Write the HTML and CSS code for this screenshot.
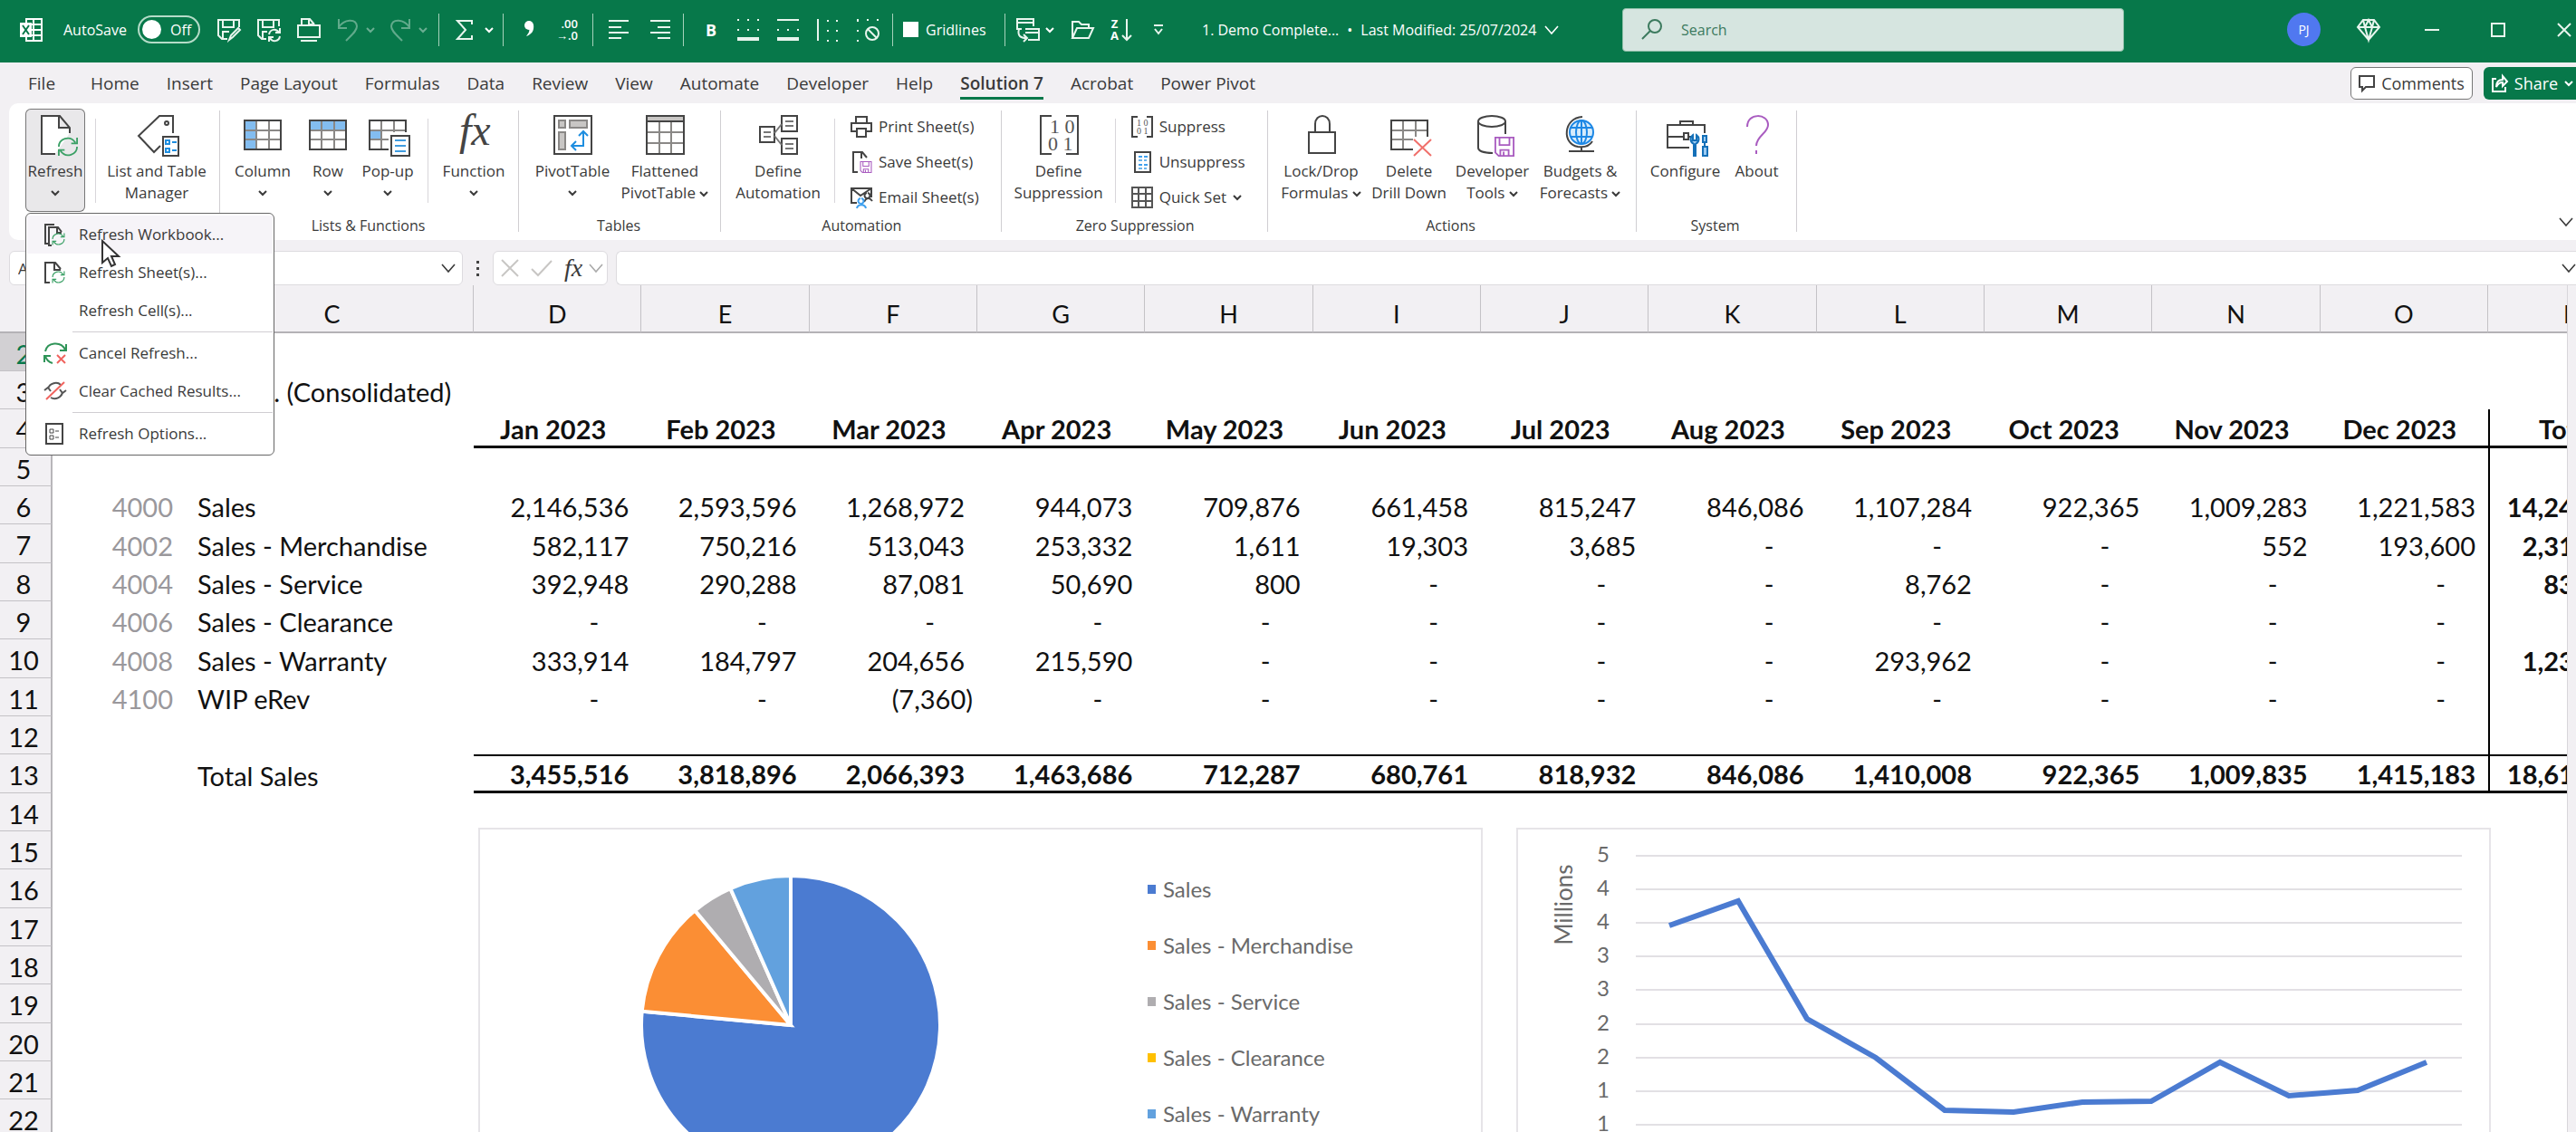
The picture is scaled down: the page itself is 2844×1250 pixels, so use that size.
FILE: index.html
```html
<!DOCTYPE html>
<html lang="en">
<head>
    <meta charset="UTF-8">
    <meta name="viewport" content="width=device-width, initial-scale=1.0">
    <title>1. Demo Complete</title>
    <link rel="stylesheet" href="styles.css">
</head>
<body>
    <!-- shared icons -->
    <svg class="sprite" aria-hidden="true">
        <symbol id="chev" viewBox="0 0 10 8"><path d="M1 2l4 4 4-4" fill="none" stroke="currentColor" stroke-width="2"/></symbol>
        <symbol id="chev-lg" viewBox="0 0 16 12"><path d="M1 2l7 8 7-8" fill="none" stroke="currentColor" stroke-width="1.6"/></symbol>
        <symbol id="sync" viewBox="0 0 24 24">
            <path d="M1 12C1 3 14-3 21 7M23 1v7h-7M23 12c0 9-13 15-20 5M1 23v-7h7" fill="none" stroke="currentColor" stroke-width="2"/>
        </symbol>
        <symbol id="grid" viewBox="0 0 42 34">
            <path d="M14 1v32M28 1v32M1 12h40M1 22h40" fill="none" stroke="#8a8886" stroke-width="2"/>
            <path d="M1 1h40v32H1z" fill="none" stroke="#444" stroke-width="2"/>
        </symbol>
        <symbol id="floppy" viewBox="0 0 24 24">
            <path d="M1 1h22v22H5l-4-4zM6 1v9h12V1M7 23v-7h10v7M11 18v4" fill="none" stroke="currentColor" stroke-width="2"/>
        </symbol>
    </svg>

    <header class="titlebar">
        <svg class="app-icon" width="26" height="26" viewBox="0 0 26 26">
            <path d="M7 1h17v24H7zM7 7h17M7 13h17M7 19h17M15 1v24" fill="none" stroke="#fff" stroke-width="2"/>
            <path d="M0 5h13v16H0z" fill="#fff"/>
            <path d="M3 8l7 10M10 8L3 18" stroke="#07784a" stroke-width="2"/>
        </svg>
        <label class="autosave" for="autosave">AutoSave</label>
        <span class="toggle"><input type="checkbox" id="autosave"><span class="knob"></span>Off</span>
        <div class="quick">
            <button aria-label="Save"><svg width="26" height="26" viewBox="0 0 26 26"><path d="M11 23H5l-4-4V2h23v8M6 2v8h12V2M6 23v-8h7M13 24l2-5 8-8 2 2-8 8z" /></svg></button>
            <button aria-label="Save and refresh"><svg width="26" height="26" viewBox="0 0 26 26"><path d="M10 23H5l-4-4V2h23v7M6 2v8h12V2M6 23v-8h5M13 18c1-6 8-7 11-2M25 11v5h-5M25 20c-1 6-8 7-11 2M13 26v-5h5"/></svg></button>
            <button aria-label="Slides"><svg width="26" height="26" viewBox="0 0 26 26"><path d="M5 8V1h9l5 6M13 1v6h6M1 8h24v13H1zM4 25h18"/></svg></button>
        </div>
        <div class="undo">
            <button aria-label="Undo"><svg width="24" height="26" viewBox="0 0 24 26"><path d="M2 1v10h9M2 10C8 1 21 0 22 9c0 5-5 9-12 16"/></svg></button>
            <svg class="chev" width="10" height="8"><use href="#chev"/></svg>
            <button aria-label="Redo"><svg width="24" height="26" viewBox="0 0 24 26"><path d="M22 1v10h-9M22 10C16 1 3 0 2 9c0 5 5 9 12 16"/></svg></button>
            <svg class="chev" width="10" height="8"><use href="#chev"/></svg>
        </div>
        <div class="tools sum">
            <button aria-label="AutoSum"><svg width="20" height="26" viewBox="0 0 20 26"><path d="M18 7V3H2l9 10L2 23h16v-4"/></svg></button>
            <svg class="chev" width="10" height="8"><use href="#chev"/></svg>
        </div>
        <div class="tools comma">
            <button aria-label="Comma style"><svg width="16" height="26" viewBox="0 0 16 26"><circle cx="8" cy="8" r="5" class="solid"/><path d="M13 7c1 7-2 11-8 13 3-4 4-6 3-9z" class="solid"/></svg></button>
            <button aria-label="Decrease decimal" class="dec"><span>.00</span><span>→.0</span></button>
        </div>
        <div class="tools align">
            <button aria-label="Align left"><svg width="26" height="26" viewBox="0 0 26 26"><path d="M1 3h22M1 10h14M1 16h22M1 22h14"/></svg></button>
            <button aria-label="Align right"><svg width="26" height="26" viewBox="0 0 26 26"><path d="M3 3h22M11 10h14M3 16h22M11 22h14"/></svg></button>
        </div>
        <div class="tools borders">
            <button aria-label="Bold" class="bold">B</button>
            <button aria-label="Bottom border"><svg width="26" height="26" viewBox="0 0 26 26"><path d="M1 2h24M1 13h24" class="dots"/><path d="M1 23h24" class="thick"/></svg></button>
            <button aria-label="Top and bottom border"><svg width="26" height="26" viewBox="0 0 26 26"><path d="M1 13h24" class="dots"/><path d="M1 2h24"/><path d="M1 23h24" class="thick"/></svg></button>
            <button aria-label="Left border"><svg width="26" height="26" viewBox="0 0 26 26"><path d="M13 2v24M23 2v24" class="dots"/><path d="M2 1v24"/></svg></button>
            <button aria-label="No border"><svg width="26" height="26" viewBox="0 0 26 26"><path d="M1 2h24M2 2v24" class="dots"/><circle cx="18" cy="17" r="7"/><path d="M13 12l10 10"/></svg></button>
        </div>
        <div class="tools gridlines">
            <input type="checkbox" id="gridlines"><label for="gridlines">Gridlines</label>
        </div>
        <div class="tools windows">
            <button aria-label="Switch windows"><svg width="26" height="26" viewBox="0 0 26 26"><path d="M6 12H1V1h18v8M1 5h18M10 12h15v12H13M10 16h15M3 12c-2 8 2 10 8 10M8 18l4 4-4 4"/></svg></button>
            <svg class="chev" width="10" height="8"><use href="#chev"/></svg>
            <button aria-label="Open"><svg width="26" height="26" viewBox="0 0 26 26"><path d="M2 22V4h7l3 3h8v4M2 22l5-11h18l-5 11z"/></svg></button>
            <button aria-label="Sort descending" class="sort"><span>Z<br>A</span><svg width="12" height="26" viewBox="0 0 12 26"><path d="M6 1v23M1 19l5 5 5-5"/></svg></button>
            <button aria-label="Customize toolbar"><svg width="12" height="12" viewBox="0 0 12 12"><path d="M1 1h10M2 5l4 5 4-5"/></svg></button>
        </div>
        <div class="doc-name"><span>1. Demo Complete...</span><span>•</span><span>Last Modified: 25/07/2024</span><svg width="16" height="12"><use href="#chev-lg"/></svg></div>
        <div class="search">
            <svg width="24" height="24" viewBox="0 0 24 24"><circle cx="15" cy="8" r="7" fill="none" stroke="#3c7a5e" stroke-width="2"/><path d="M10 13L1 22" stroke="#3c7a5e" stroke-width="2"/></svg>
            <input type="text" placeholder="Search" aria-label="Search">
        </div>
        <div class="window-controls">
            <span class="avatar">PJ</span>
            <button aria-label="Premium"><svg width="26" height="26" viewBox="0 0 26 26"><path d="M7 2h12l6 8-12 14L1 10zM1 10h24M7 2l2 8 4 14 4-14 2-8M9 10l4-8 4 8"/></svg></button>
            <button aria-label="Minimize"><svg width="16" height="16" viewBox="0 0 16 16"><path d="M0 8h16"/></svg></button>
            <button aria-label="Maximize"><svg width="16" height="16" viewBox="0 0 16 16"><path d="M1 1h14v14H1z"/></svg></button>
            <button aria-label="Close"><svg width="16" height="16" viewBox="0 0 16 16"><path d="M1 1l14 14M15 1L1 15"/></svg></button>
        </div>
    </header>

    <nav class="tabs">
        <a href="#" class="file">File</a>
        <a href="#">Home</a>
        <a href="#">Insert</a>
        <a href="#">Page Layout</a>
        <a href="#">Formulas</a>
        <a href="#">Data</a>
        <a href="#">Review</a>
        <a href="#">View</a>
        <a href="#">Automate</a>
        <a href="#">Developer</a>
        <a href="#">Help</a>
        <a href="#" class="active">Solution 7</a>
        <a href="#">Acrobat</a>
        <a href="#">Power Pivot</a>
        <div class="tab-actions">
            <button class="comments"><svg width="18" height="18" viewBox="0 0 18 18"><path d="M1 1h16v12H8l-4 4v-4H1z" fill="none" stroke="#444" stroke-width="2"/></svg>Comments</button>
            <button class="share"><svg width="18" height="20" viewBox="0 0 18 20"><path d="M5 5H1v14h14v-5M5 14c0-6 3-8 7-8V2l5 6-5 5V9c-3 0-5 1-7 5z" fill="none" stroke="#fff" stroke-width="2"/></svg>Share<svg width="10" height="8"><use href="#chev"/></svg></button>
        </div>
    </nav>

    <section class="ribbon">
        <div class="group first">
            <div class="buttons">
                <div class="dropdown">
                    <button class="big xs open">
                        <svg width="48" height="48" viewBox="0 0 48 48"><path d="M24 44H9V2h20l11 13v6M28 2v13h12" fill="#fff" stroke="#444" stroke-width="2"/><svg x="26" y="25" width="24" height="22" class="green"><use href="#sync"/></svg></svg>
                        <span>Refresh</span><svg width="10" height="8"><use href="#chev"/></svg>
                    </button>
                    <div class="menu">
                        <button class="hover"><svg width="24" height="24" viewBox="0 0 24 24"><path d="M6 22H1V1h10M8 24H5V4h10l4 5M14 4v6h5" fill="none" stroke="#444" stroke-width="2"/><svg x="8" y="10" width="15" height="14" class="green"><use href="#sync"/></svg></svg>Refresh Workbook...</button>
                        <button><svg width="24" height="24" viewBox="0 0 24 24"><path d="M6 23H1V1h11l6 7M11 1v8h7" fill="none" stroke="#444" stroke-width="2"/><svg x="8" y="10" width="15" height="14" class="green"><use href="#sync"/></svg></svg>Refresh Sheet(s)...</button>
                        <button><span class="no-icon"></span>Refresh Cell(s)...</button>
                        <hr>
                        <button><svg width="24" height="24" viewBox="0 0 24 24" fill="none" stroke-width="2"><path d="M1 10C3 0 18-2 23 8M24 2v7h-7M9 23C5 22 2 19 1 15M0 22v-7h7" stroke="#2f9458"/><path d="M14 14l9 9M23 14l-9 9" stroke="#f0645f"/></svg>Cancel Refresh...</button>
                        <button><svg width="24" height="24" viewBox="0 0 24 24" fill="none" stroke-width="2"><path d="M4 9C6 3 14 1 18 5M0 11l4-3 3 4M20 13c-1 6-8 9-13 6M24 11l-4 3-3-4" stroke="#555"/><path d="M2 21L22 2" stroke="#f0645f"/></svg>Clear Cached Results...</button>
                        <hr>
                        <button><svg width="24" height="24" viewBox="0 0 24 24" fill="none" stroke="#444"><path d="M2 1h18v22H2z" stroke-width="2"/><path d="M6 7h4v4H6zM6 14h4v4H6zM12 9h4M12 16h4"/></svg>Refresh Options...</button>
                    </div>
                </div>
                <i class="sep"></i>
                <button class="big xl">
                    <svg width="48" height="48" viewBox="0 0 48 48" fill="none" stroke="#444" stroke-width="2"><path d="M42 21V2H27L4 24l17 18 7-7"/><circle cx="35" cy="10" r="2"/><path d="M31 25h17v21H31z" fill="#fff"/><path d="M34 29h4v4h-4zM34 38h4v4h-4zM41 31h5M41 40h5" stroke="#1e8ee0"/></svg>
                    <span>List and Table<br>Manager</span>
                </button>
            </div>
            <div class="group-name"></div>
        </div>

        <div class="group">
            <div class="buttons">
                <button class="big sm">
                    <svg width="48" height="48" viewBox="0 0 48 48"><path d="M4 6h14v33H4z" fill="#83bdf0"/><use href="#grid" x="3" y="6" width="42" height="34"/></svg>
                    <span>Column</span><svg width="10" height="8"><use href="#chev"/></svg>
                </button>
                <button class="big xs">
                    <svg width="48" height="48" viewBox="0 0 48 48"><path d="M4 6h41v12H4z" fill="#83bdf0"/><use href="#grid" x="3" y="6" width="42" height="34"/></svg>
                    <span>Row</span><svg width="10" height="8"><use href="#chev"/></svg>
                </button>
                <button class="big xs">
                    <svg width="48" height="48" viewBox="0 0 48 48"><path d="M4 18h13v11H4z" fill="#83bdf0"/><use href="#grid" x="3" y="6" width="42" height="34"/><path d="M25 20h24v28H25z" fill="#fff"/><path d="M28 24h20v22H28z" fill="#fff" stroke="#444" stroke-width="2"/><path d="M32 29h12M32 35h12M32 41h12" stroke="#3f9ce0" stroke-width="2"/></svg>
                    <span>Pop-up</span><svg width="10" height="8"><use href="#chev"/></svg>
                </button>
                <i class="sep"></i>
                <button class="big sm">
                    <svg width="48" height="48" viewBox="0 0 48 48"><text x="8" y="34" class="fx-lg">fx</text></svg>
                    <span>Function</span><svg width="10" height="8"><use href="#chev"/></svg>
                </button>
            </div>
            <div class="group-name">Lists &amp; Functions</div>
        </div>

        <div class="group">
            <div class="buttons">
                <button class="big lg">
                    <svg width="48" height="48" viewBox="0 0 48 48" fill="none" stroke="#444" stroke-width="2"><path d="M4 2h41v42H4z"/><g fill="#c8c6c4" stroke="#8a8886"><path d="M9 7h7v8H9zM21 7h19v8H21zM9 20h7v19H9z"/></g><path d="M23 35h13V20M31 24l5-5 5 5M28 30l-5 5 5 5" stroke="#1e8ee0"/></svg>
                    <span>PivotTable</span><svg width="10" height="8"><use href="#chev"/></svg>
                </button>
                <button class="big lg">
                    <svg width="48" height="48" viewBox="0 0 48 48" fill="none" stroke-width="2"><path d="M4 2h41v6H4z" fill="#c8c6c4"/><path d="M18 8v36M31 8v36M4 20h41M4 32h41" stroke="#8a8886"/><path d="M4 2h41v42H4zM4 8h41" stroke="#444"/></svg>
                    <span>Flattened<br>PivotTable <svg width="10" height="8"><use href="#chev"/></svg></span>
                </button>
            </div>
            <div class="group-name">Tables</div>
        </div>

        <div class="group split">
            <div class="buttons">
                <button class="big lg">
                    <svg width="48" height="48" viewBox="0 0 48 48" fill="none" stroke="#444" stroke-width="2"><path d="M4 14h16v17H4zM28 2h17v17H28zM28 27h17v17H28z"/><path d="M8 20h8M8 25h8M32 8h9M32 13h9M32 33h9M32 38h9M20 21l8-10M20 24l8 10" stroke="#777"/></svg>
                    <span>Define<br>Automation</span>
                </button>
                <i class="sep"></i>
                <div class="list">
                    <button><svg width="24" height="24" viewBox="0 0 24 24" fill="none" stroke="#444" stroke-width="2"><path d="M6 17H1V8h22v9h-5M6 8V1h12v7M7 14h10v9H7z"/></svg>Print Sheet(s)</button>
                    <button><svg width="24" height="24" viewBox="0 0 24 24" fill="none" stroke="#444" stroke-width="2"><path d="M8 23H3V1h10l5 6M12 1v7"/><svg x="10" y="11" width="14" height="13" class="purple"><use href="#floppy"/></svg></svg>Save Sheet(s)</button>
                    <button><svg width="24" height="24" viewBox="0 0 24 24" fill="none" stroke="#444" stroke-width="2"><path d="M7 18H1V2h22v10M1 2l10 8 12-8M19 7a3 3 0 1 1-1 0M15 17c2-5 6-5 9-1"/><path d="M12 13a3 3 0 1 1-1 0M7 24c1-5 9-5 10 0" stroke="#3fa0ee"/></svg>Email Sheet(s)</button>
                </div>
            </div>
            <div class="group-name">Automation</div>
        </div>

        <div class="group split">
            <div class="buttons">
                <button class="big lg">
                    <svg width="48" height="48" viewBox="0 0 48 48"><path d="M16 2H4v42h12M32 2h13v42H32" fill="none" stroke="#444" stroke-width="2"/><text x="14" y="21" class="bits">1 0</text><text x="12" y="40" class="bits">0 1</text></svg>
                    <span>Define<br>Suppression</span>
                </button>
                <i class="sep"></i>
                <div class="list">
                    <button><svg width="24" height="24" viewBox="0 0 24 24"><path d="M7 1H1v22h6M17 1h6v22h-6" fill="none" stroke="#444" stroke-width="2"/><text x="6" y="11" class="bits-sm">1 0</text><text x="6" y="20" class="bits-sm">0 1</text></svg>Suppress</button>
                    <button><svg width="24" height="24" viewBox="0 0 24 24" fill="none" stroke-width="2"><path d="M4 1h17v22H4z" stroke="#444"/><path d="M8 6h4M14 6h4M8 15h4M14 15h4" stroke="#3fa0ee"/><path d="M8 10h4M14 10h3M8 19h4M14 19h3" stroke="#6bb4ea"/></svg>Unsuppress</button>
                    <button><svg width="24" height="24" viewBox="0 0 24 24" fill="none" stroke="#555" stroke-width="2"><path d="M1 1h22v22H1zM8 1v22M16 1v22M1 8h22M1 16h22"/></svg>Quick Set <svg width="10" height="8"><use href="#chev"/></svg></button>
                </div>
            </div>
            <div class="group-name">Zero Suppression</div>
        </div>

        <div class="group">
            <div class="buttons">
                <button class="big lg">
                    <svg width="48" height="48" viewBox="0 0 48 48" fill="none" stroke="#444" stroke-width="2"><path d="M10 20h29v23H10zM17 20v-9c0-12 16-12 16 0v9"/></svg>
                    <span>Lock/Drop<br>Formulas <svg width="10" height="8"><use href="#chev"/></svg></span>
                </button>
                <button class="big md">
                    <svg width="48" height="48" viewBox="0 0 48 48"><use href="#grid" x="3" y="6" width="42" height="34"/><path d="M28 25h20v20H28z" fill="#fff"/><path d="M29 28l19 18M48 28L29 46" stroke="#f0706b" stroke-width="2"/></svg>
                    <span>Delete<br>Drill Down</span>
                </button>
                <button class="big md">
                    <svg width="48" height="48" viewBox="0 0 48 48" fill="none" stroke="#444" stroke-width="2"><ellipse cx="23" cy="8" rx="15" ry="6"/><path d="M8 8v29c0 4 7 6 16 6M38 8v14"/><svg x="26" y="25" width="22" height="22" class="purple"><use href="#floppy"/></svg></svg>
                    <span>Developer<br>Tools <svg width="10" height="8"><use href="#chev"/></svg></span>
                </button>
                <button class="big lg">
                    <svg width="48" height="48" viewBox="0 0 48 48" fill="none" stroke="#444" stroke-width="2"><path d="M26 3C5 4 3 33 21 36c7 1 13-1 16-6M25 37v4M11 41h28"/><g stroke="#1e88e5"><circle cx="25" cy="20" r="13" fill="#d6ebfb"/><ellipse cx="25" cy="20" rx="6" ry="13"/><path d="M13 15h24M13 25h24M25 7v26"/></g></svg>
                    <span>Budgets &amp;<br>Forecasts <svg width="10" height="8"><use href="#chev"/></svg></span>
                </button>
            </div>
            <div class="group-name">Actions</div>
        </div>

        <div class="group">
            <div class="buttons">
                <button class="big md">
                    <svg width="48" height="48" viewBox="0 0 48 48" fill="none" stroke="#444" stroke-width="2"><path d="M28 37H4V12h41v9M18 12V8h14v4M4 25h18M27 25h3M22 21h5v7h-5z"/><path d="M33 46V33c-5-3-4-8-1-10v6h4v-6c3 2 4 7-1 10v13zM43 46V36h5v10zM43 24h4v7h-4zM45 31v5" fill="#9ccbf2" stroke="#1470b8"/></svg>
                    <span>Configure</span>
                </button>
                <button class="big xs">
                    <svg width="48" height="48" viewBox="0 0 48 48" fill="none" stroke="#a95cc0" stroke-width="2"><path d="M13 14C13-2 36-1 36 12c0 9-13 12-13 23M23 40v4"/></svg>
                    <span>About</span>
                </button>
            </div>
            <div class="group-name">System</div>
        </div>
        <button class="collapse" aria-label="Collapse ribbon"><svg width="16" height="12"><use href="#chev-lg"/></svg></button>
    </section>

    <div class="formula-bar">
        <div class="name-box"><input type="text" value="A2" aria-label="Name box"><svg width="16" height="12"><use href="#chev-lg"/></svg></div>
        <span class="dots-v"><i></i><i></i><i></i></span>
        <div class="fx-box">
            <svg width="20" height="20" viewBox="0 0 20 20"><path d="M1 1l18 18M19 1L1 19" stroke="#c8c6c4" stroke-width="2"/></svg>
            <svg width="24" height="20" viewBox="0 0 24 20"><path d="M1 11l7 7L23 2" fill="none" stroke="#c8c6c4" stroke-width="2"/></svg>
            <span class="fx">fx</span>
            <svg class="pale" width="16" height="12"><use href="#chev-lg"/></svg>
        </div>
        <div class="formula"><input type="text" aria-label="Formula"><svg width="16" height="12"><use href="#chev-lg"/></svg></div>
    </div>

    <main class="sheet">
        <table class="cells">
            <colgroup>
                <col class="col-head"><col class="col-b"><col class="col-c">
                <col><col><col><col><col><col><col><col><col><col><col><col>
                <col class="col-p">
            </colgroup>
            <thead><tr id="letters"></tr></thead>
            <tbody id="rows"></tbody>
        </table>

        <div class="charts">
            <div class="chart pie">
                <svg width="330" height="330" viewBox="-165 -165 330 330" id="pie"></svg>
                <ul class="legend">
                    <li><i class="c1"></i>Sales</li>
                    <li><i class="c2"></i>Sales - Merchandise</li>
                    <li><i class="c3"></i>Sales - Service</li>
                    <li><i class="c4"></i>Sales - Clearance</li>
                    <li><i class="c5"></i>Sales - Warranty</li>
                </ul>
            </div>
            <div class="chart">
                <svg class="line" viewBox="0 0 1072 440" id="line">
                    <text class="axis-title" transform="translate(60 83) rotate(-90)">Millions</text>
                </svg>
            </div>
        </div>
    </main>

    <svg class="cursor" width="20" height="30" viewBox="0 0 20 30"><path d="M1 1v24l6-5 4 9 4-2-4-9h8z" fill="#fff" stroke="#333" stroke-width="2"/></svg>

    <script>
        const months = ['Jan', 'Feb', 'Mar', 'Apr', 'May', 'Jun', 'Jul', 'Aug', 'Sep', 'Oct', 'Nov', 'Dec'];
        const accounts = {
            6: ['4000', 'Sales', [2146536, 2593596, 1268972, 944073, 709876, 661458, 815247, 846086, 1107284, 922365, 1009283, 1221583]],
            7: ['4002', 'Sales - Merchandise', [582117, 750216, 513043, 253332, 1611, 19303, 3685, 0, 0, 0, 552, 193600]],
            8: ['4004', 'Sales - Service', [392948, 290288, 87081, 50690, 800, 0, 0, 0, 8762, 0, 0, 0]],
            9: ['4006', 'Sales - Clearance', [0, 0, 0, 0, 0, 0, 0, 0, 0, 0, 0, 0]],
            10: ['4008', 'Sales - Warranty', [333914, 184797, 204656, 215590, 0, 0, 0, 0, 293962, 0, 0, 0]],
            11: ['4100', 'WIP eRev', [0, 0, -7360, 0, 0, 0, 0, 0, 0, 0, 0, 0]],
            13: ['', 'Total Sales', [3455516, 3818896, 2066393, 1463686, 712287, 680761, 818932, 846086, 1410008, 922365, 1009835, 1415183]]
        };

        function sum(values) {
            return values.reduce((a, b) => a + b, 0);
        }

        function moneyCell(value) {
            const text = Math.abs(value).toLocaleString('en-US');
            if (value === 0) return '<td class="nil">-</td>';
            if (value < 0) return '<td class="neg">(' + text + ')</td>';
            return '<td>' + text + '</td>';
        }

        function buildSheet() {
            const letters = ['', 'B', ...'CDEFGHIJKLMNOP'];
            document.getElementById('letters').innerHTML = letters.map(l => '<th>' + l + '</th>').join('');

            let html = '';
            for (let r = 2; r <= 22; r++) {
                let cells = '<td></td>'.repeat(15);
                if (r === 3) {
                    cells = '<td></td><td>Sol Inc. (Consolidated)</td>' + '<td></td>'.repeat(13);
                } else if (r === 4) {
                    cells = '<td></td><td></td>' + months.map(m => '<td>' + m + ' 2023</td>').join('') + '<td>Total</td>';
                } else if (accounts[r]) {
                    const [code, name, values] = accounts[r];
                    cells = '<td>' + code + '</td><td>' + name + '</td>' + values.map(moneyCell).join('') + moneyCell(sum(values));
                }
                html += '<tr class="r' + r + '"><th>' + r + '</th>' + cells + '</tr>';
            }
            document.getElementById('rows').innerHTML = html;
        }

        function drawPie() {
            const parts = [6, 7, 8, 10].map(r => sum(accounts[r][2]));
            const names = ['c1', 'c2', 'c3', 'c5'];
            const total = sum(parts);
            let angle = 0;
            let html = '';
            parts.forEach((part, i) => {
                const next = angle + part / total * 2 * Math.PI;
                const large = next - angle > Math.PI ? 1 : 0;
                html += '<path class="' + names[i] + '" d="M0 0L' + 165 * Math.sin(angle) + ' ' + -165 * Math.cos(angle) +
                    'A165 165 0 ' + large + ' 1 ' + 165 * Math.sin(next) + ' ' + -165 * Math.cos(next) + 'Z"/>';
                angle = next;
            });
            document.getElementById('pie').innerHTML = html;
        }

        function drawLine() {
            const labels = [5, 4, 4, 3, 3, 2, 2, 1, 1, 0];
            const points = [106, 79, 209, 252, 310, 312, 301, 300, 257, 294, 288, 257];
            let html = '';
            labels.forEach((label, i) => {
                const y = 29 + Math.round(i * 37.1);
                html += '<path class="grid" d="M130 ' + y + 'H1042"/><text class="axis" x="94" y="' + (y + 7) + '">' + label + '</text>';
            });
            const path = points.map((y, i) => (167 + i * 76) + ',' + y).join(' ');
            html += '<polyline points="' + path + '"/>';
            document.getElementById('line').insertAdjacentHTML('beforeend', html);
        }

        buildSheet();
        drawPie();
        drawLine();
    </script>
</body>
</html>
```
FILE: styles.css
```css
* {
    box-sizing: border-box;
}

body {
    margin: 0;
    height: 100vh;
    overflow: hidden;
    display: flex;
    flex-direction: column;
    background: #f2f0f3;
    color: #3a3a3a;
    font-family: "Open Sans", "Noto Sans", sans-serif;
    font-size: 17px;
}

button, input {
    font: inherit;
    color: inherit;
    border: 0;
    padding: 0;
    margin: 0;
    background: none;
}

svg {
    display: block;
    overflow: visible;
    flex: none;
}

.sprite {
    position: absolute;
    width: 0;
    height: 0;
}

/* Title bar */
.titlebar {
    display: flex;
    align-items: center;
    height: 69px;
    flex: none;
    padding: 0 5px 4px 22px;
    background: #07784a;
    color: #fff;
    font-size: 16px;
    white-space: nowrap;
}

.titlebar button svg path,
.titlebar button svg circle {
    fill: none;
    stroke: #e8f5ee;
    stroke-width: 2;
}

.titlebar button svg .solid {
    fill: #fff;
    stroke: none;
}

.titlebar button svg .dots {
    stroke-dasharray: 2 9;
}

.titlebar button svg .thick {
    stroke-width: 4;
}

.autosave {
    width: 82px;
    margin-left: 22px;
}

.toggle {
    display: flex;
    align-items: center;
    width: 69px;
    height: 31px;
    padding-left: 3px;
    gap: 10px;
    border: 2px solid #b5dcc8;
    border-radius: 16px;
}

.toggle input {
    position: absolute;
    opacity: 0;
}

.knob {
    width: 21px;
    height: 21px;
    border-radius: 50%;
    background: #fff;
}

.quick {
    display: flex;
    gap: 18px;
    margin-left: 19px;
}

.undo {
    display: flex;
    align-items: center;
    gap: 8px;
    width: 112px;
    margin-left: 18px;
    opacity: 0.4;
}

.undo .chev + button {
    margin-left: 8px;
}

.tools {
    display: flex;
    align-items: center;
    height: 36px;
    border-left: 1px solid #a6d2bb;
}

.sum {
    width: 71px;
    gap: 12px;
    padding-left: 18px;
}

.comma {
    width: 99px;
    gap: 22px;
    padding-left: 20px;
}

.dec {
    display: flex;
    flex-direction: column;
    align-items: flex-end;
    font-size: 13px;
    font-weight: 600;
    line-height: 13px;
}

.align {
    width: 100px;
    gap: 18px;
    padding-left: 16px;
}

.borders {
    width: 231px;
    gap: 18px;
    padding-left: 20px;
}

.bold {
    width: 20px;
    font-size: 18px;
    font-weight: 700;
}

.gridlines {
    width: 124px;
    gap: 8px;
    padding-left: 11px;
}

.gridlines input {
    appearance: none;
    width: 17px;
    height: 17px;
    background: #fff;
}

.windows {
    width: 218px;
    padding-left: 12px;
    gap: 18px;
}

.windows .chev {
    margin-left: -12px;
}

.windows button:last-child {
    margin-left: 5px;
}

.sort {
    display: flex;
    font-size: 13px;
    font-weight: 700;
    line-height: 13px;
    gap: 3px;
}

.doc-name {
    display: flex;
    align-items: center;
    gap: 9px;
    width: 464px;
    font-size: 16px;
}

.search {
    display: flex;
    align-items: center;
    gap: 20px;
    width: 554px;
    height: 48px;
    padding-left: 20px;
    background: #d6e5e0;
    border: 1px solid #8fbfa8;
    border-radius: 4px;
}

.search input {
    flex: 1;
    min-width: 0;
}

.search input::placeholder {
    color: #3c7a5e;
    opacity: 1;
}

.window-controls {
    display: flex;
    align-items: center;
    gap: 57px;
    margin-left: auto;
}

.window-controls button:nth-of-type(1) {
    margin: 0 -8px 0 -17px;
}

.avatar {
    width: 37px;
    height: 37px;
    border-radius: 50%;
    background: #5078f0;
    font-size: 14px;
    line-height: 37px;
    text-align: center;
}

/* Tabs */
.tabs {
    display: flex;
    align-items: center;
    gap: 30px;
    height: 45px;
    flex: none;
    padding-left: 31px;
    font-size: 19px;
    white-space: nowrap;
}

.tabs a {
    line-height: 30px;
    padding: 4px 0 0;
    border-bottom: 3px solid transparent;
    color: #3a3a3a;
    text-decoration: none;
}

.tabs .file {
    margin-right: 9px;
}

.tabs .active {
    border-color: #07784a;
    font-weight: 600;
}

.tab-actions {
    display: flex;
    gap: 12px;
    margin: 0 -6px 0 auto;
    font-size: 18px;
}

.comments, .share {
    display: flex;
    align-items: center;
    justify-content: center;
    gap: 7px;
    height: 36px;
    border-radius: 6px;
}

.comments {
    width: 135px;
    background: #fff;
    border: 1px solid #777;
}

.share {
    width: 108px;
    background: #07784a;
    color: #fff;
}

/* Ribbon */
.ribbon {
    display: flex;
    height: 151px;
    flex: none;
    margin-left: 10px;
    background: #fff;
    border-radius: 10px 0 0 10px;
    line-height: 24px;
    white-space: nowrap;
}

.group {
    display: flex;
    flex-direction: column;
    margin: 8px 0 9px;
    padding: 0 10px 0 8px;
    border-right: 1px solid #d0ced2;
}

.first {
    padding: 0 13px 0 18px;
}

.split {
    padding: 0 10px 0 12px;
}

.buttons {
    display: flex;
    height: 114px;
    margin-top: -2px;
}

.group-name {
    height: 24px;
    margin-top: 3px;
    text-align: center;
    font-size: 16px;
}

.sep {
    width: 1px;
    height: 93px;
    margin: 11px 11px 0;
    background: #d8d6da;
}

.dropdown {
    position: relative;
    z-index: 2;
}

.big {
    display: flex;
    flex-direction: column;
    align-items: center;
    height: 114px;
    padding-top: 6px;
    text-align: center;
    border-radius: 6px;
}

.big > span {
    margin-top: 3px;
}

.big > span + svg {
    margin-top: 8px;
}

.big > span svg {
    display: inline-block;
    vertical-align: middle;
}

.xs { width: 66px; }
.sm { width: 78px; }
.md { width: 92px; }
.lg { width: 102px; }
.xl { width: 112px; }

.open {
    background: #e9e8ea;
    box-shadow: inset 0 0 0 1px #777;
}

.green { color: #3aa065; }
.purple { color: #a95cc0; }

.fx-lg, .fx {
    font-family: "Liberation Serif", serif;
    font-style: italic;
    fill: #444;
}

.fx-lg {
    font-size: 48px;
}

.bits, .bits-sm {
    font-family: "Liberation Serif", serif;
    font-size: 22px;
    fill: #555;
}

.bits-sm {
    font-size: 10px;
}

.list {
    display: flex;
    flex-direction: column;
    padding: 0 14px 0 6px;
}

.list button {
    display: flex;
    align-items: center;
    gap: 7px;
    height: 39px;
    flex: none;
}

.collapse {
    align-self: flex-end;
    margin: 0 3px 14px auto;
}

/* Refresh menu */
.menu {
    position: absolute;
    top: 115px;
    left: 0;
    width: 275px;
    padding: 2px 1px;
    background: #fff;
    border: 1px solid #666;
    border-radius: 6px;
}

.menu button {
    display: flex;
    align-items: center;
    gap: 14px;
    width: 100%;
    height: 42px;
    padding-left: 19px;
}

.menu .hover {
    background: #f6f4f8;
}

.menu hr {
    height: 1px;
    margin: 2px 0 2px 50px;
    border: 0;
    background: #d0ced2;
}

.no-icon {
    width: 24px;
}

/* Formula bar */
.formula-bar {
    display: flex;
    height: 50px;
    flex: none;
    padding: 12px 0 0 10px;
}

.name-box, .fx-box, .formula {
    display: flex;
    align-items: center;
    height: 38px;
    background: #fff;
    border: 1px solid #dddbdf;
    border-radius: 6px;
}

.name-box {
    width: 501px;
    padding: 0 7px 0 9px;
}

.name-box input, .formula input {
    flex: 1;
    min-width: 0;
}

.dots-v {
    display: flex;
    flex-direction: column;
    justify-content: center;
    gap: 4px;
    width: 33px;
    padding-left: 15px;
}

.dots-v i {
    width: 3px;
    height: 3px;
    background: #444;
}

.fx-box {
    width: 127px;
    gap: 13px;
    padding: 0 2px 0 8px;
}

.fx-box .fx {
    width: 22px;
    margin-right: -4px;
    font-size: 28px;
    line-height: 30px;
}

.pale {
    color: #aaa;
    margin-left: -4px;
}

.formula {
    flex: 1;
    margin-left: 9px;
    border-right: 0;
    border-radius: 6px 0 0 6px;
}

/* Sheet */
.sheet {
    position: relative;
    flex: 1;
    min-height: 0;
    margin-right: 9px;
    overflow: hidden;
    background: #fff;
    border-right: 1px solid #d8d6da;
    color: #111;
    font-family: Lato, "Liberation Sans", sans-serif;
    font-size: 29px;
}

.cells {
    width: calc(100% + 96px);
    table-layout: fixed;
    border-spacing: 0;
    white-space: nowrap;
    line-height: 34px;
}

.col-head { width: 58px; }
.col-b { width: 153px; }
.col-c { width: 312px; }
.col-p { width: 183px; }

.cells th {
    padding: 0;
    font-weight: 400;
    background: #f2f0f3;
}

.cells thead th {
    height: 53px;
    padding-top: 12px;
    border-right: 1px solid #c4c2c6;
    border-bottom: 2px solid #b4b2b6;
    font-size: 27px;
}

.cells tbody th {
    border-right: 2px solid #b8b6ba;
    border-bottom: 1px solid #c4c2c6;
}

.cells tbody tr {
    height: 42px;
}

.cells tbody tr:nth-child(3n) {
    height: 43px;
}

.cells td {
    padding: 4px 14px 0 0;
    text-align: right;
}

.cells th:first-child {
    padding: 4px 4px 0 0;
}

.cells td:nth-child(2) {
    padding-right: 20px;
    color: #9a989c;
}

.cells td:nth-child(3) {
    padding-left: 7px;
    text-align: left;
}

.cells .nil {
    padding-right: 47px;
}

.cells .neg {
    padding-right: 5px;
}

.cells .r2 th {
    background: #d2d0d3;
    color: #07784a;
}

.cells .r4 td:nth-child(n+4) {
    padding-right: 10px;
    text-align: center;
    font-weight: 700;
    border-bottom: 3px solid #000;
}

.r13 td:nth-child(n+4),
.cells td:nth-child(16) {
    font-weight: 700;
}

.cells .r13 td:nth-child(n+4) {
    padding-top: 2px;
    border-top: 2px solid #000;
    border-bottom: 3px solid #000;
}

/* rule between December and the total */
.r4, .r5, .r6, .r7, .r8, .r9, .r10, .r11, .r12, .r13 {
    --rule: 2px;
}

.cells td:nth-child(16) {
    border-left: var(--rule, 0) solid #000;
}

/* Charts float over the cells */
.charts {
    position: absolute;
    top: 599px;
    left: 528px;
    right: 84px;
    display: grid;
    grid-template-columns: 1109fr 1076fr;
    gap: 37px;
    height: 440px;
    color: #6a6a6a;
    font-size: 24px;
}

.chart {
    background: #fff;
    border: 2px solid #e6e4e8;
}

.pie {
    display: flex;
    align-items: flex-start;
    padding: 51px 0 0 178px;
}

.pie path {
    stroke: #fff;
    stroke-width: 4;
}

.legend {
    list-style: none;
    margin: -16px 0 0 229px;
    padding: 0;
    line-height: 62px;
}

.legend li {
    display: flex;
    align-items: center;
    gap: 8px;
}

.legend i {
    width: 9px;
    height: 10px;
}

.c1 { background: #4b7bd1; fill: #4b7bd1; }
.c2 { background: #fb8e34; fill: #fb8e34; }
.c3 { background: #afadb0; fill: #afadb0; }
.c4 { background: #ffc000; fill: #ffc000; }
.c5 { background: #62a1de; fill: #62a1de; }

.line {
    width: 100%;
}

.line .grid {
    stroke: #e2e0e4;
    stroke-width: 2;
}

.line text {
    fill: #6a6a6a;
    text-anchor: middle;
}

.line .axis-title {
    font-size: 26px;
}

.line polyline {
    fill: none;
    stroke: #4b7bd1;
    stroke-width: 6;
}

.cursor {
    position: absolute;
    top: 265px;
    left: 112px;
    z-index: 3;
}
```
